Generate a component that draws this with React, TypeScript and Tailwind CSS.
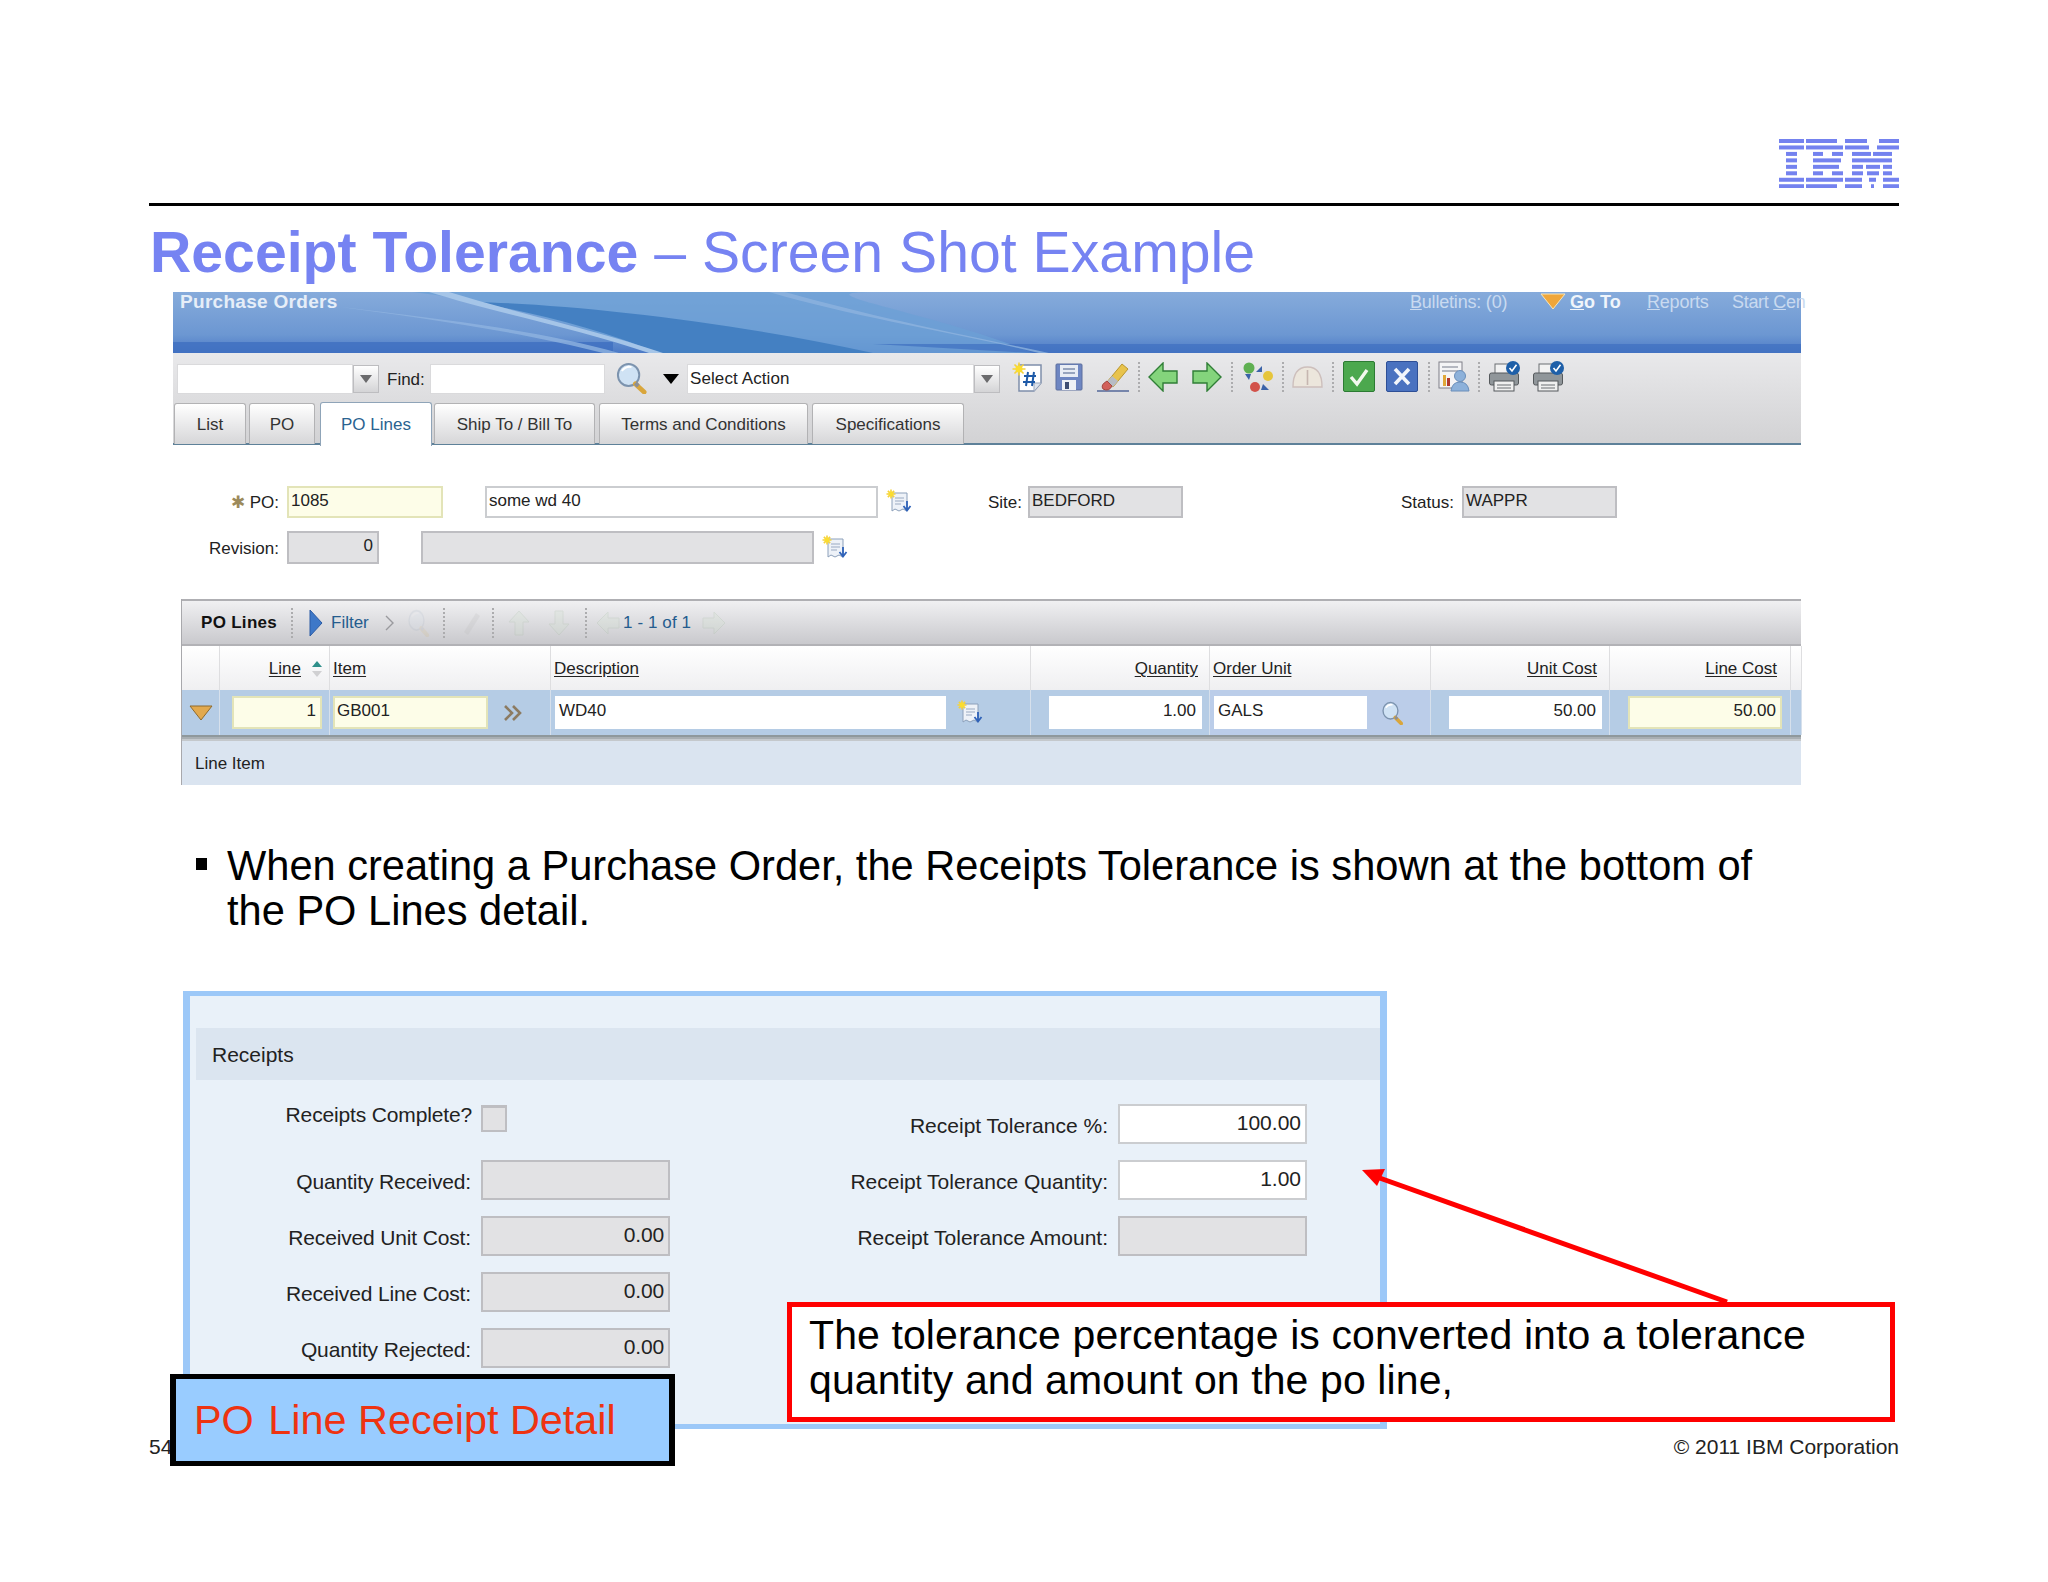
import type { ReactNode } from "react";

const ibmRows: number[][][] = [
  [[0, 25], [27, 58], [66, 88], [100, 120]],
  [[0, 25], [27, 64], [66, 90], [98, 120]],
  [[7, 18], [34, 44], [53, 64], [73, 92], [94, 113]],
  [[7, 18], [34, 62], [73, 113]],
  [[7, 18], [34, 60], [73, 84], [87, 101], [104, 113]],
  [[7, 18], [34, 44], [53, 64], [73, 84], [88, 100], [104, 113]],
  [[0, 25], [27, 64], [66, 83], [90, 97], [104, 120]],
  [[0, 25], [27, 58], [66, 83], [92, 95], [104, 120]],
];

function IbmLogo() {
  return (
    <svg width="120" height="49" viewBox="0 0 120 49" className="block">
      {ibmRows.map((row, i) =>
        row.map(([a, b]) => (
          <rect key={`${i}-${a}`} x={a} y={i * 6.46} width={b - a} height="4" fill="#7482EF" />
        ))
      )}
    </svg>
  );
}

function Banner() {
  return (
    <div className="relative h-[61px] bg-gradient-to-b from-[#86ABDB] via-[#6C97D2] via-70% to-[#4C7AC6]">
      <svg viewBox="0 0 1628 61" preserveAspectRatio="none" className="absolute inset-0 h-full w-full">
        <path d="M240 0 H700 C620 0 760 20 860 61 H480 C400 30 320 10 240 0 Z" fill="#6CA0D6" opacity="0.75" />
        <path d="M300 10 C400 12 560 30 700 61 H486 C430 38 360 20 300 10 Z" fill="#4480C2" />
        <path d="M0 50 H440 V61 H0 Z" fill="#3F6FC1" opacity="0.8" />
        <path d="M700 52 H1628 V61 H860 Z" fill="#3F6FC1" opacity="0.7" />
        <path d="M160 14 C240 24 360 36 446 61 H430 C350 40 250 26 160 14 Z" fill="#8FB3E0" opacity="0.8" />
        <path d="M256 0 H276 C340 20 430 40 490 61 H476 C410 38 320 20 256 0 Z" fill="#A5C5E8" />
        <path d="M596 0 H612 C700 25 800 45 876 61 H866 C780 40 680 25 596 0 Z" fill="#8DB3DF" opacity="0.8" />
      </svg>
      <div className="relative flex h-[20px] items-center whitespace-nowrap text-[18px] text-[#C9DAF0]">
        <span className="ml-[7px] w-[156px] shrink-0 text-[19px] font-bold tracking-[0.3px] text-[#E6EEF8]">Purchase Orders</span>
        <span className="ml-[1074px] w-[95px] shrink-0 tracking-[-0.2px]"><span className="underline">B</span>ulletins: (0)</span>
        <svg width="26" height="18" viewBox="0 0 26 18" className="ml-[35px] shrink-0">
          <path d="M1 1 H25 L13 16 Z" fill="#EFA63A" stroke="#F8E6B8" />
        </svg>
        <span className="ml-[4px] w-[51px] shrink-0 font-bold text-[#F0F5FB]"><span className="underline">G</span>o To</span>
        <span className="ml-[26px] w-[59px] shrink-0 tracking-[-0.2px]"><span className="underline">R</span>eports</span>
        <span className="ml-[26px] shrink-0 tracking-[-0.3px]">Start <span className="underline">C</span>en</span>
      </div>
    </div>
  );
}

function Dropdown() {
  return (
    <div className="flex h-[28px] w-[26px] shrink-0 items-center justify-center border border-[#BDBDC0] bg-gradient-to-b from-white to-[#D4D4D6]">
      <div className="h-0 w-0 border-x-[6px] border-t-[8px] border-x-transparent border-t-[#6A6A6C]" />
    </div>
  );
}

function Magnifier({ w, h, faint }: { w: number; h: number; faint?: boolean }) {
  return (
    <svg width={w} height={h} viewBox="0 0 34 32" preserveAspectRatio="none" className={faint ? "shrink-0 opacity-10" : "shrink-0"}>
      <circle cx="14" cy="13" r="11" fill="#CFE2F4" stroke="#7C93AE" strokeWidth="2" />
      <path d="M7 9 Q11 4 17 5" stroke="#fff" strokeWidth="2" fill="none" />
      <path d="M21 22 L30 30" stroke="#D9A63C" strokeWidth="5" strokeLinecap="round" />
      <path d="M21 21 L24 24" stroke="#8B8F96" strokeWidth="4" />
    </svg>
  );
}

function Star({ x, y, r }: { x: number; y: number; r: number }) {
  return (
    <g>
      <path d={`M${x - r} ${y} H${x + r} M${x} ${y - r} V${y + r} M${x - r * 0.7} ${y - r * 0.7} L${x + r * 0.7} ${y + r * 0.7} M${x + r * 0.7} ${y - r * 0.7} L${x - r * 0.7} ${y + r * 0.7}`} stroke="#F5D23C" strokeWidth="1.6" />
      <circle cx={x} cy={y} r={r * 0.55} fill="#FBDD2E" />
    </g>
  );
}

function NewDocIcon() {
  return (
    <svg width="30" height="30" viewBox="0 0 30 30" className="shrink-0">
      <path d="M7 3 H29 V21 L22 29 H7 Z" fill="#fff" stroke="#7F8FAB" strokeWidth="1.5" />
      <path d="M22 29 V21 H29" fill="#DDE3EC" stroke="#9AA7BC" />
      <path d="M16 10 L14 24 M22 10 L20 24 M12 14 H24 M11 20 H23" stroke="#1E5AA8" strokeWidth="2" />
      <Star x={7} y={7} r={6.5} />
    </svg>
  );
}

function SaveIcon() {
  return (
    <svg width="28" height="28" viewBox="0 0 28 28" className="shrink-0">
      <rect x="1" y="1" width="26" height="26" rx="1" fill="#6E86C2" stroke="#5C6F9E" />
      <rect x="5" y="2" width="18" height="12" fill="#E8ECF4" />
      <path d="M8 6 H20 M8 10 H20" stroke="#7C8CAC" strokeWidth="1.4" />
      <rect x="7" y="17" width="14" height="10" fill="#EEF1F6" />
      <rect x="10" y="19" width="4" height="7" fill="#3E4E72" />
    </svg>
  );
}

function EraserIcon() {
  return (
    <svg width="33" height="30" viewBox="0 0 33 30" className="shrink-0">
      <path d="M0 29 H32" stroke="#5C6F9E" strokeWidth="1.6" />
      <path d="M10 20 L25 2 L31 7 L16 25 Z" fill="#E8C34C" stroke="#B9962E" />
      <path d="M10 20 L15 14 L21 19 L16 25 Z" fill="#B7BCC4" />
      <path d="M6 27 Q3 23 10 19 L15 24 Q12 30 6 27 Z" fill="#D2605A" stroke="#A44740" />
    </svg>
  );
}

function GreenArrow({ right }: { right?: boolean }) {
  return (
    <svg width="30" height="30" viewBox="0 0 30 30" className="shrink-0">
      <path
        d={right ? "M1 9 H15 V1 L29 15 L15 29 V21 H1 Z" : "M29 9 H15 V1 L1 15 L15 29 V21 H29 Z"}
        fill="#84D47C"
        stroke="#2F7E36"
        strokeWidth="1.4"
      />
    </svg>
  );
}

function MultiIcon() {
  return (
    <svg width="30" height="30" viewBox="0 0 30 30" className="shrink-0">
      <circle cx="6" cy="6" r="5.5" fill="#5FB052" />
      <circle cx="25" cy="14" r="5" fill="#E6C53C" />
      <circle cx="12" cy="25" r="5" fill="#D2524A" />
      <path d="M19 4 V10 H13 Z" fill="#3B63A8" />
      <path d="M2 12 H8 L6 18 Z" fill="#3B63A8" />
      <path d="M20 22 L26 28 H18 Z" fill="#3B63A8" />
    </svg>
  );
}

function GaugeIcon() {
  return (
    <svg width="31" height="24" viewBox="0 0 31 24" className="shrink-0">
      <path d="M1 22 Q1 2 15.5 2 Q30 2 30 22 Z" fill="#ECE6DC" stroke="#CDBFBC" strokeWidth="1.4" />
      <path d="M15.5 5 V20" stroke="#C6B6B0" strokeWidth="1.6" />
    </svg>
  );
}

function StatusBox({ x }: { x?: boolean }) {
  return (
    <svg width="32" height="31" viewBox="0 0 32 31" className="shrink-0">
      <rect x="0.5" y="0.5" width="31" height="30" rx="1.5" fill={x ? "#4A72C0" : "#4CA84E"} stroke={x ? "#2E4F96" : "#2C7B33"} />
      {x ? (
        <path d="M9 8 L23 23 M23 8 L9 23" stroke="#F3F6FB" strokeWidth="3.6" />
      ) : (
        <path d="M8 16 L14 23 L24 9" stroke="#F3F8EE" strokeWidth="3.4" fill="none" />
      )}
    </svg>
  );
}

function ReportIcon() {
  return (
    <svg width="32" height="31" viewBox="0 0 32 31" className="shrink-0">
      <rect x="1" y="1" width="23" height="26" fill="#F4F4F6" stroke="#7F7F88" />
      <path d="M4 6 H20 M4 10 H20" stroke="#9FA3AE" strokeWidth="1.4" />
      <rect x="5" y="14" width="3" height="11" fill="#E0A83A" />
      <rect x="9" y="17" width="3" height="8" fill="#B03A2E" />
      <circle cx="22" cy="15" r="5.5" fill="#8DB1DA" stroke="#6A8EBA" />
      <path d="M13 30 Q14 21 22 21 Q30 21 31 30 Z" fill="#8DB1DA" stroke="#6A8EBA" />
    </svg>
  );
}

function PrinterIcon() {
  return (
    <svg width="32" height="31" viewBox="0 0 32 31" className="shrink-0">
      <rect x="6" y="3" width="18" height="12" fill="#F2F2F2" stroke="#6A6E72" />
      <rect x="0.5" y="12" width="29" height="12" rx="2" fill="#90969A" stroke="#55595C" />
      <rect x="5" y="20" width="20" height="10" fill="#F0F0F0" stroke="#55595C" />
      <path d="M8 24 H22 M8 27 H22" stroke="#6A6E72" />
      <circle cx="24" cy="7" r="7" fill="#1E5FA8" />
      <path d="M20.5 7 L23 10 L27.5 3.8" stroke="#fff" strokeWidth="1.6" fill="none" />
    </svg>
  );
}

function NoteIcon() {
  return (
    <svg width="26" height="26" viewBox="0 0 26 26" className="shrink-0">
      <path d="M6 4 H21 V22 L17 20 L13 22 L9 20 L6 22 Z" fill="#EEF2F8" stroke="#8CA0BA" />
      <path d="M9 9 H18 M9 12 H18 M9 15 H15" stroke="#9AAAC2" />
      <path d="M21 12 V20 M17.5 17 L21 21.5 L24.5 17" stroke="#2F62B8" strokeWidth="1.8" fill="none" />
      <Star x={5} y={5} r={4.5} />
    </svg>
  );
}

function Sep() {
  return <div className="h-[30px] w-0 shrink-0 border-l-[2px] border-dotted border-[#ACACAE]" />;
}

function FaintArrow({ d }: { d: string }) {
  return (
    <svg width="24" height="26" viewBox="0 0 24 26" className="shrink-0 opacity-20">
      <path d={d} fill="#CFE3CB" stroke="#9AB596" />
    </svg>
  );
}

function Tab({ w, children, active }: { w: string; children: ReactNode; active?: boolean }) {
  return (
    <div
      className={
        active
          ? `${w} relative -mb-[2px] flex h-[44px] shrink-0 items-center justify-center rounded-t-[3px] border border-b-0 border-[#8FA4B8] bg-white pt-[1px] text-[#2B6390]`
          : `${w} flex h-[41px] shrink-0 items-center justify-center rounded-t-[3px] border border-b-0 border-[#B2B2B4] bg-gradient-to-b from-white to-[#D6D6D8] pt-[1px] text-[#333]`
      }
    >
      {children}
    </div>
  );
}

function Field({ w, tone, right, children, text = "text-[17px]" }: { w: string; tone: string; right?: boolean; children?: ReactNode; text?: string }) {
  return (
    <div className={`${w} ${tone} ${text} ${right ? "justify-end pr-[4px]" : "pl-[2px]"} flex h-full shrink-0 items-center border-2 pb-[3px] text-[#222]`}>
      {children}
    </div>
  );
}

const white = "bg-white border-[#CBCDD0]";
const yellow = "bg-[#FDFDE8] border-[#E3E4B8]";
const gray = "bg-[#E2E2E4] border-[#BEBEC2]";

function HeadCell({ className, children }: { className?: string; children?: ReactNode }) {
  return (
    <div className={`flex items-center border-r border-[#DEDEE0] bg-gradient-to-b from-white to-[#EFEFF1] pt-[2px] ${className ?? ""}`}>
      {children}
    </div>
  );
}

function RowCell({ className, children }: { className?: string; children?: ReactNode }) {
  return <div className={`flex items-center border-r border-[#D6E0EC] py-[6px] ${className ?? ""}`}>{children}</div>;
}

function PoTable() {
  return (
    <div className="ml-[8px] mt-[35px] w-[1620px] border-l border-[#A8A8AC]">
      <div className="flex h-[47px] items-center border-y-2 border-t-[#AFAFB3] border-b-[#B2B2B6] bg-gradient-to-b from-[#F0F0F2] to-[#C9C9CD] text-[17px]">
        <span className="ml-[19px] w-[79px] shrink-0 font-bold tracking-[0.3px] text-[#111]">PO Lines</span>
        <div className="ml-[11px]"><Sep /></div>
        <svg width="14" height="28" viewBox="0 0 14 28" className="ml-[16px] shrink-0">
          <path d="M1 1 L13 14 L1 27 Z" fill="#3E78C8" stroke="#2B5BA4" />
        </svg>
        <span className="ml-[8px] w-[36px] shrink-0 text-[#245C8E]">Filter</span>
        <svg width="10" height="16" viewBox="0 0 10 16" className="ml-[17px] shrink-0">
          <path d="M2 1 L9 8 L2 15" stroke="#9A9A9E" strokeWidth="1.4" fill="none" />
        </svg>
        <div className="ml-[13px]"><Magnifier w={23} h={28} faint /></div>
        <div className="ml-[13px]"><Sep /></div>
        <svg width="20" height="26" viewBox="0 0 20 26" className="ml-[16px] shrink-0 opacity-20">
          <path d="M3 22 L15 3 L19 6 L7 25 Z" fill="#B8B8B8" />
        </svg>
        <div className="ml-[11px]"><Sep /></div>
        <div className="ml-[13px]"><FaintArrow d="M12 1 L22 12 H16 V25 H8 V12 H2 Z" /></div>
        <div className="ml-[16px]"><FaintArrow d="M12 25 L22 14 H16 V1 H8 V14 H2 Z" /></div>
        <div className="ml-[14px]"><Sep /></div>
        <div className="ml-[9px]"><FaintArrow d="M1 13 L12 2 V8 H23 V18 H12 V24 Z" /></div>
        <span className="ml-[3px] w-[70px] shrink-0 whitespace-nowrap tracking-[0.1px] text-[#245C8E]">1 - 1 of 1</span>
        <div className="ml-[9px]"><FaintArrow d="M23 13 L12 2 V8 H1 V18 H12 V24 Z" /></div>
      </div>
      <div className="grid h-[44px] grid-cols-[38px_110px_221px_480px_179px_221px_179px_181px_11px] text-[17px] text-[#222]">
        <HeadCell />
        <HeadCell className="justify-end pr-[5px]">
          <span className="underline underline-offset-2">Line</span>
          <svg width="14" height="18" viewBox="0 0 14 18" className="ml-[9px] shrink-0">
            <path d="M7 1 L12 7 H2 Z" fill="#2E8F8A" />
            <path d="M7 17 L12 11 H2 Z" fill="#D0D0D2" />
          </svg>
        </HeadCell>
        <HeadCell className="pl-[3px]"><span className="underline underline-offset-2">Item</span></HeadCell>
        <HeadCell className="pl-[3px]"><span className="underline underline-offset-2">Description</span></HeadCell>
        <HeadCell className="justify-end pr-[11px]"><span className="underline underline-offset-2">Quantity</span></HeadCell>
        <HeadCell className="pl-[3px]"><span className="underline underline-offset-2">Order Unit</span></HeadCell>
        <HeadCell className="justify-end pr-[12px]"><span className="underline underline-offset-2">Unit Cost</span></HeadCell>
        <HeadCell className="justify-end pr-[13px]"><span className="underline underline-offset-2">Line Cost</span></HeadCell>
        <HeadCell />
      </div>
      <div className="grid h-[45px] grid-cols-[38px_110px_221px_480px_179px_221px_179px_181px_11px] bg-[#B5CCE5]">
        <RowCell className="justify-center">
          <svg width="24" height="16" viewBox="0 0 24 16">
            <path d="M1 1 H23 L12 15 Z" fill="#E2A94E" stroke="#8E6A2C" />
          </svg>
        </RowCell>
        <RowCell className="pl-[12px]"><Field w="w-[90px]" tone={yellow} right>1</Field></RowCell>
        <RowCell className="pl-[3px]">
          <Field w="w-[155px]" tone={yellow}>GB001</Field>
          <svg width="20" height="18" viewBox="0 0 20 18" className="ml-[15px] shrink-0">
            <path d="M2 2 L9 9 L2 16 M10 2 L17 9 L10 16" stroke="#8C7B62" strokeWidth="2.6" fill="none" />
          </svg>
        </RowCell>
        <RowCell className="pl-[4px]">
          <Field w="w-[391px]" tone="bg-white border-white">WD40</Field>
          <div className="ml-[11px]"><NoteIcon /></div>
        </RowCell>
        <RowCell className="pl-[18px]"><Field w="w-[153px]" tone="bg-white border-white" right>1.00</Field></RowCell>
        <RowCell className="bg-[#BBCDE9] pl-[4px]">
          <Field w="w-[153px]" tone="bg-white border-white">GALS</Field>
          <div className="ml-[14px]"><Magnifier w={23} h={24} /></div>
        </RowCell>
        <RowCell className="pl-[18px]"><Field w="w-[153px]" tone="bg-white border-white" right>50.00</Field></RowCell>
        <RowCell className="pl-[18px]"><Field w="w-[154px]" tone={yellow} right>50.00</Field></RowCell>
        <RowCell />
      </div>
      <div className="h-[6px] border-y-2 border-t-[#8F989C] border-b-[#C4C8CC] bg-[#A8AEB2]" />
      <div className="flex h-[44px] items-center bg-[#DAE4F0] pl-[13px] pt-[1px] text-[17px] text-[#222]">Line Item</div>
    </div>
  );
}

function ReceiptRow({ label, w, tone, value }: { label: string; w: string; tone: string; value?: string }) {
  return (
    <div className="mb-[16px] flex h-[40px] items-center">
      <span className={`${w} shrink-0 whitespace-nowrap pt-[3px] text-right text-[21px] text-[#222]`}>{label}</span>
      <div className="ml-[10px] h-full">
        <Field w="w-[189px]" tone={tone} right text="text-[21px]">{value}</Field>
      </div>
    </div>
  );
}

function ReceiptsPanel() {
  return (
    <div className="ml-[183px] mt-[58px] h-[438px] w-[1204px] border-x-[7px] border-y-[5px] border-[#9CC8F8] bg-[#E9F1F9] pt-[32px]">
      <div className="ml-[6px] flex h-[52px] items-center bg-[#DBE5F0] pl-[16px] pt-[1px] text-[21px] text-[#222]">Receipts</div>
      <div className="flex pt-[24px]">
        <div className="w-[481px] shrink-0 tracking-[-0.15px]">
          <div className="mb-[16px] flex h-[40px] items-start">
            <span className="-mt-[5px] w-[282px] shrink-0 text-right text-[21px] text-[#222]">Receipts Complete?</span>
            <div className="ml-[9px] mt-[1px] h-[27px] w-[26px] border-2 border-t-[3px] border-[#BEBEC2] bg-[#E2E2E4]" />
          </div>
          <ReceiptRow label="Quantity Received:" w="w-[281px]" tone={gray} />
          <ReceiptRow label="Received Unit Cost:" w="w-[281px]" tone={gray} value="0.00" />
          <ReceiptRow label="Received Line Cost:" w="w-[281px]" tone={gray} value="0.00" />
          <ReceiptRow label="Quantity Rejected:" w="w-[281px]" tone={gray} value="0.00" />
        </div>
        <div className="ml-[100px] shrink-0">
          <ReceiptRow label="Receipt Tolerance %:" w="w-[337px]" tone={white} value="100.00" />
          <ReceiptRow label="Receipt Tolerance Quantity:" w="w-[337px]" tone={white} value="1.00" />
          <ReceiptRow label="Receipt Tolerance Amount:" w="w-[337px]" tone={gray} />
        </div>
      </div>
    </div>
  );
}

export default function App() {
  return (
    <div className="relative h-[1582px] w-[2048px] overflow-hidden bg-white text-black [font-family:'Liberation_Sans',Arial,sans-serif]">
      <div className="flex justify-end pr-[149px] pt-[139px]">
        <IbmLogo />
      </div>
      <div className="mx-[149px] mt-[15px] h-[3px] bg-black" />
      <h1 className="ml-[150px] mt-[18px] whitespace-nowrap text-[57.2px] leading-[56px] text-[#7683F2]">
        <span className="font-bold">Receipt Tolerance</span> – Screen Shot Example
      </h1>

      <div className="ml-[173px] mt-[12px] w-[1628px]">
        <Banner />
        <div className="h-[92px] border-b-2 border-[#5E8199] bg-gradient-to-b from-[#E9E9EB] to-[#D2D2D4] pt-[10px]">
          <div className="flex h-[32px] items-center text-[17px] text-[#222]">
            <div className="ml-[4px] h-[30px] w-[176px] shrink-0 border border-[#DADADC] bg-white" />
            <Dropdown />
            <span className="ml-[8px] w-[43px] shrink-0 pt-[1px]">Find:</span>
            <div className="h-[30px] w-[175px] shrink-0 border border-[#DADADC] bg-white" />
            <div className="ml-[10px] pb-[2px]"><Magnifier w={33} h={32} /></div>
            <div className="ml-[15px] h-0 w-0 shrink-0 border-x-[8px] border-t-[10px] border-x-transparent border-t-black" />
            <div className="ml-[8px] flex h-[30px] w-[287px] shrink-0 items-center border border-[#DADADC] bg-white pl-[2px] tracking-[0.1px]">Select Action</div>
            <Dropdown />
            <div className="flex items-center pb-[5px]">
              <div className="ml-[12px]"><NewDocIcon /></div>
              <div className="ml-[13px]"><SaveIcon /></div>
              <div className="ml-[14px]"><EraserIcon /></div>
              <div className="ml-[8px]"><Sep /></div>
              <div className="ml-[8px]"><GreenArrow /></div>
              <div className="ml-[14px]"><GreenArrow right /></div>
              <div className="ml-[9px]"><Sep /></div>
              <div className="ml-[10px]"><MultiIcon /></div>
              <div className="ml-[9px]"><Sep /></div>
              <div className="ml-[8px]"><GaugeIcon /></div>
              <div className="ml-[9px]"><Sep /></div>
              <div className="ml-[9px]"><StatusBox /></div>
              <div className="ml-[11px]"><StatusBox x /></div>
              <div className="ml-[10px]"><Sep /></div>
              <div className="ml-[8px]"><ReportIcon /></div>
              <div className="ml-[8px]"><Sep /></div>
              <div className="ml-[9px]"><PrinterIcon /></div>
              <div className="ml-[12px]"><PrinterIcon /></div>
            </div>
          </div>
          <div className="ml-[1px] mt-[7px] flex items-end text-[17px]">
            <Tab w="w-[72px]">List</Tab>
            <div className="ml-[3px]"><Tab w="w-[66px]">PO</Tab></div>
            <div className="ml-[5px]"><Tab w="w-[112px]" active>PO Lines</Tab></div>
            <div className="ml-[2px]"><Tab w="w-[161px]">Ship To / Bill To</Tab></div>
            <div className="ml-[4px]"><Tab w="w-[209px]">Terms and Conditions</Tab></div>
            <div className="ml-[4px]"><Tab w="w-[152px]">Specifications</Tab></div>
          </div>
        </div>

        <div className="pt-[41px] text-[17px] text-[#222]">
          <div className="flex h-[32px] items-center">
            <span className="w-[106px] shrink-0 pt-[2px] text-right">
              <span className="text-[#9C8A5C]">✱</span> PO:
            </span>
            <div className="ml-[8px] h-full"><Field w="w-[156px]" tone={yellow}>1085</Field></div>
            <div className="ml-[42px] h-full"><Field w="w-[393px]" tone={white}>some wd 40</Field></div>
            <div className="ml-[8px]"><NoteIcon /></div>
            <span className="ml-[76px] w-[33px] shrink-0 pt-[2px]">Site:</span>
            <div className="ml-[7px] h-full"><Field w="w-[155px]" tone={gray}>BEDFORD</Field></div>
            <span className="ml-[218px] w-[52px] shrink-0 pt-[2px]">Status:</span>
            <div className="ml-[9px] h-full"><Field w="w-[155px]" tone={gray}>WAPPR</Field></div>
          </div>
          <div className="mt-[13px] flex h-[33px] items-center">
            <span className="w-[106px] shrink-0 pt-[2px] text-right">Revision:</span>
            <div className="ml-[8px] h-full"><Field w="w-[92px]" tone={gray} right>0</Field></div>
            <div className="ml-[42px] h-full"><Field w="w-[393px]" tone={gray} /></div>
            <div className="ml-[8px]"><NoteIcon /></div>
          </div>
          <PoTable />
        </div>
      </div>

      <div className="ml-[196px] mt-[58px] flex h-[90px] w-[1580px]">
        <div className="mt-[15px] h-[12px] w-[11px] shrink-0 bg-black" />
        <p className="ml-[20px] text-[41.6px] leading-[45px] text-black">
          When creating a Purchase Order, the Receipts Tolerance is shown at the bottom of the PO Lines detail.
        </p>
      </div>

      <ReceiptsPanel />

      <div className="mx-[149px] mt-[8px] flex justify-between text-[21px] leading-[20px] text-[#222]">
        <span>54</span>
        <span>© 2011 IBM Corporation</span>
      </div>

      {/* callouts sitting on top of the slide */}
      <svg width="2048" height="1582" viewBox="0 0 2048 1582" className="pointer-events-none absolute left-0 top-0">
        <path d="M1727 1302 L1374 1176" stroke="#FF0000" strokeWidth="5" />
        <path d="M1362 1170 L1385 1169 L1377 1186 Z" fill="#FF0000" />
      </svg>
      <div className="absolute left-[170px] top-[1374px] flex h-[92px] w-[505px] items-center border-x-[6px] border-y-[5px] border-black bg-[#99CCFF] pl-[18px] pt-[1px] text-[41.4px] text-[#EE3311]">
        <span className="whitespace-nowrap">PO <span className="ml-[3px]">Line Receipt Detail</span></span>
      </div>
      <div className="absolute left-[787px] top-[1302px] h-[120px] w-[1108px] border-[5px] border-[#FF0000] bg-white pl-[17px] pt-[6px] text-[41px] leading-[45px] tracking-[0.1px] text-black">
        The tolerance percentage is converted into a tolerance quantity and amount on the po line,
      </div>
    </div>
  );
}
